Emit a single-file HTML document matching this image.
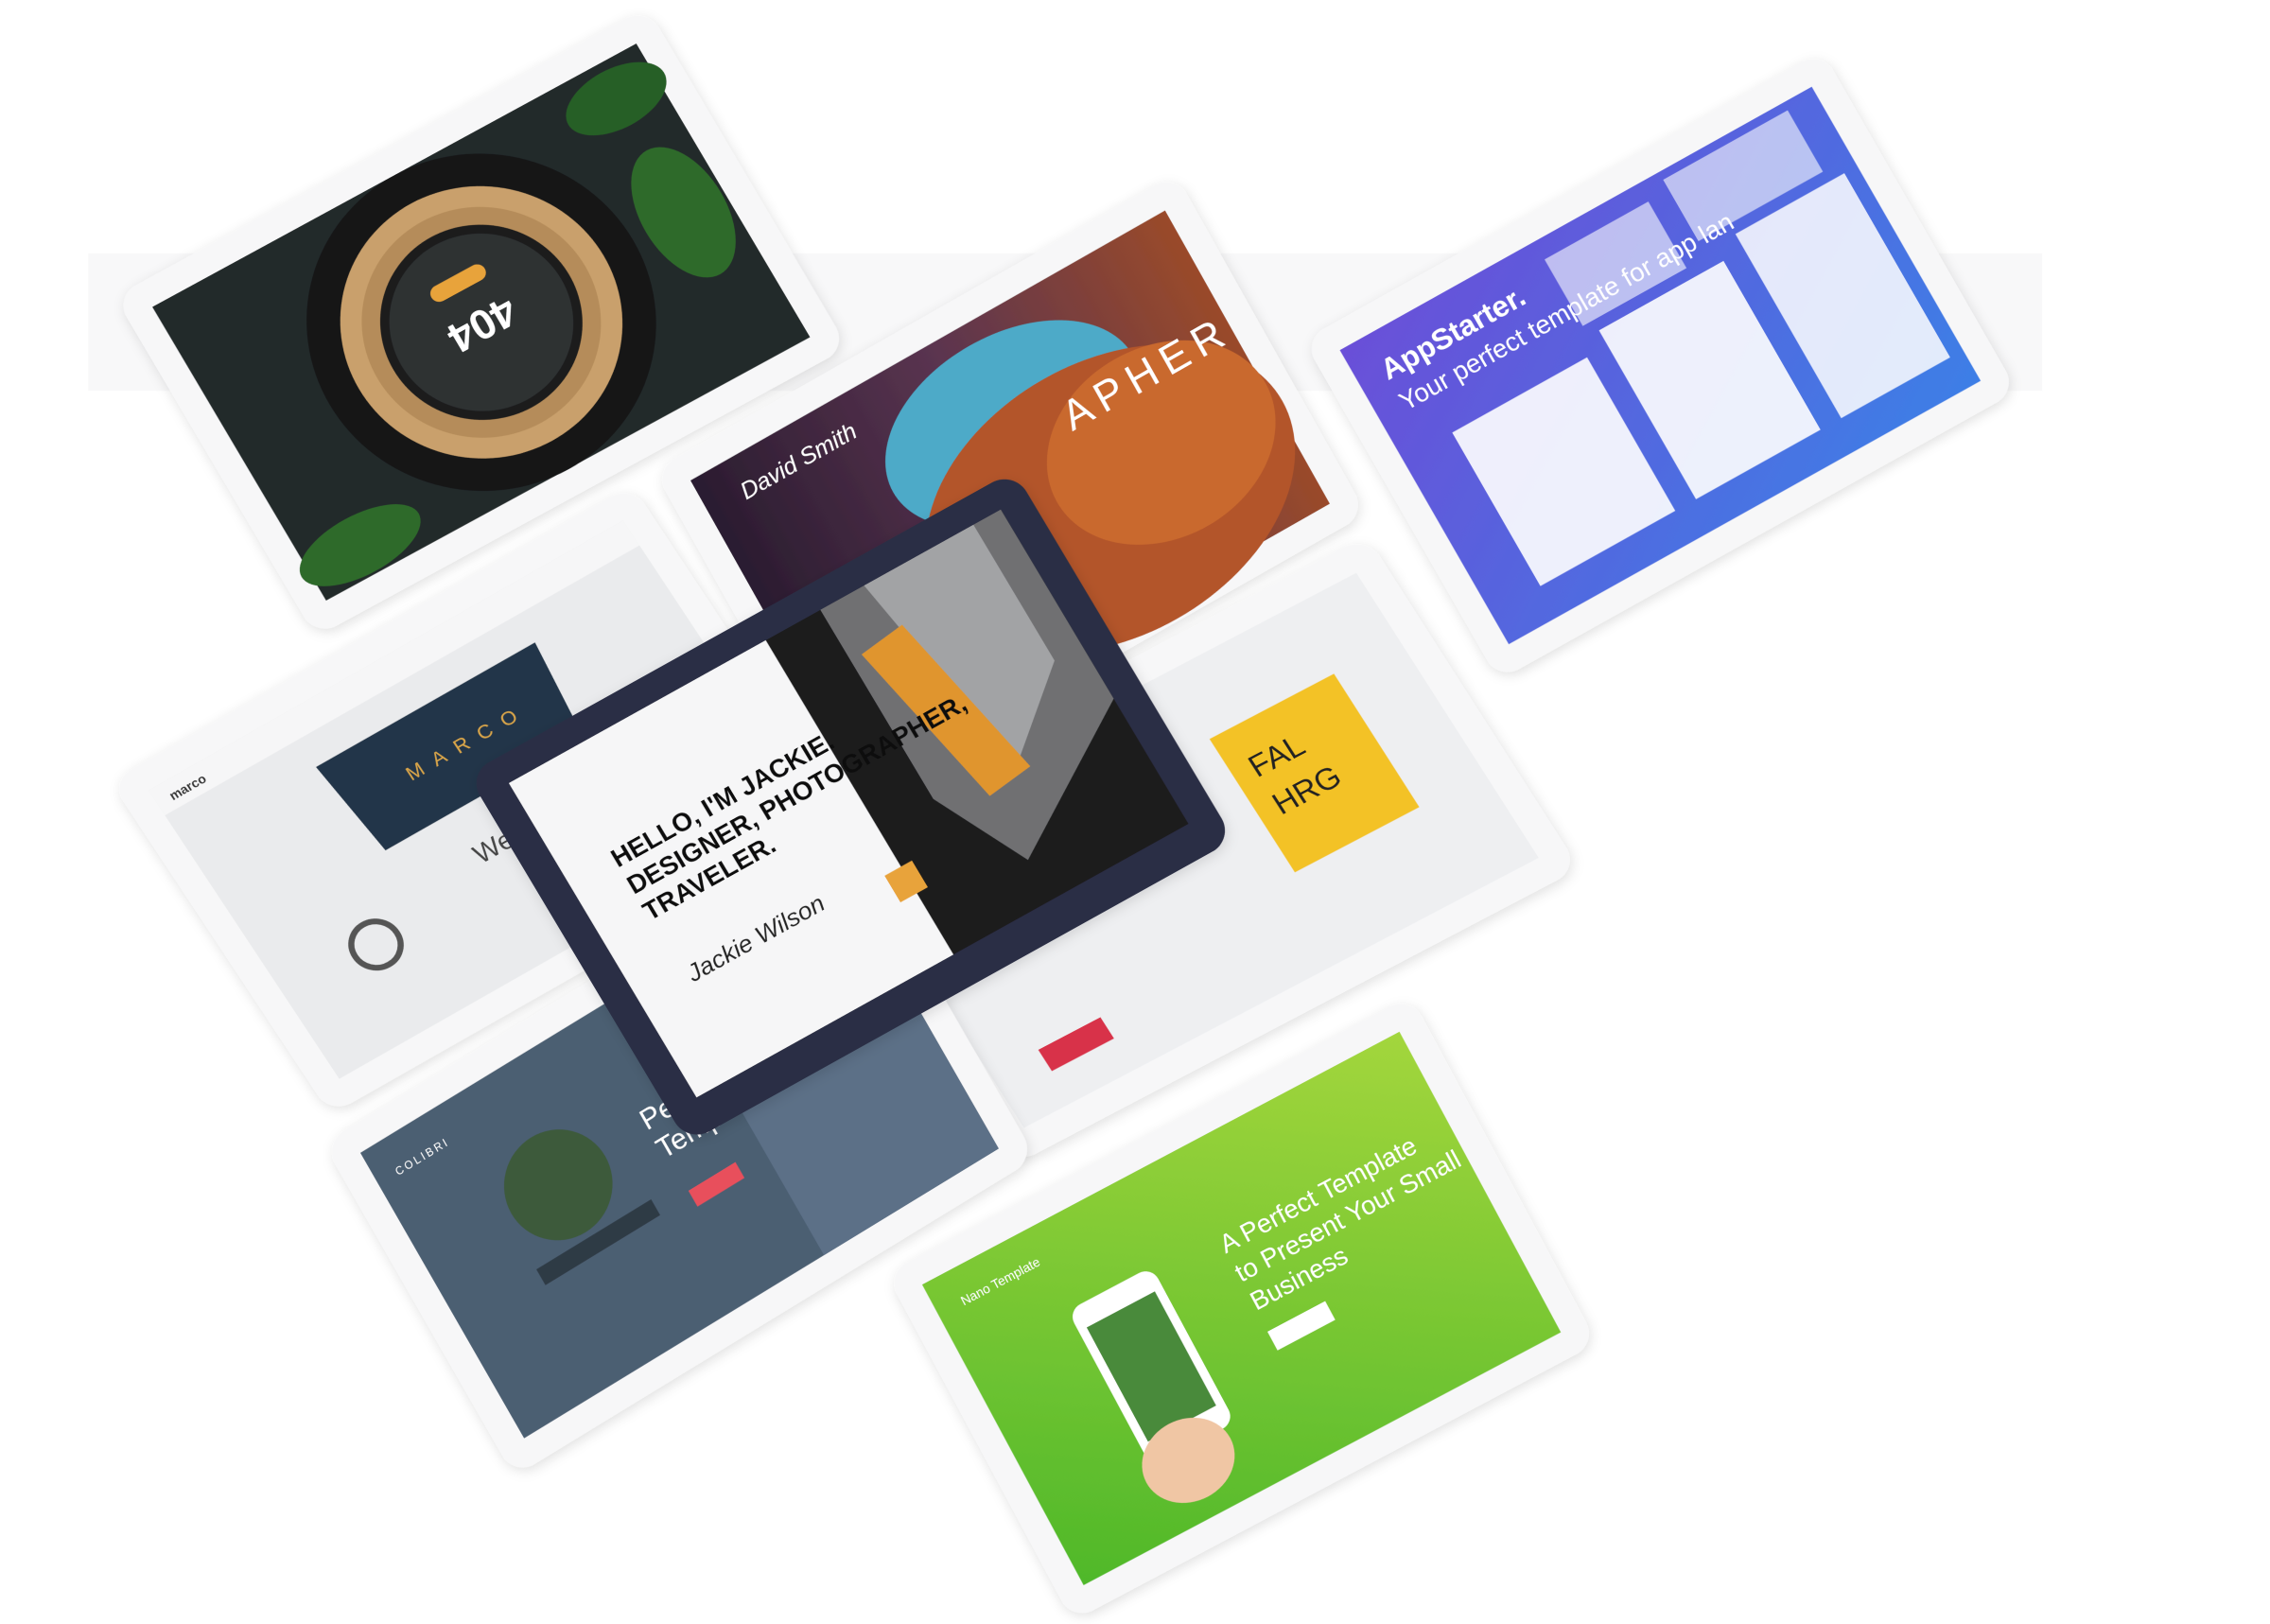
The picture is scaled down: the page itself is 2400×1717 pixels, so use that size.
<!DOCTYPE html>
<html><head><meta charset="utf-8"><style>
html,body{margin:0;padding:0;background:#fff;width:2400px;height:1717px;overflow:hidden}
svg{display:block}
text{font-family:"Liberation Sans",sans-serif}
</style></head><body>
<svg width="2400" height="1717" viewBox="0 0 1545 1122" preserveAspectRatio="none">
<defs>
<filter id="sh" x="-20%" y="-20%" width="140%" height="140%"><feDropShadow dx="0" dy="6" stdDeviation="10" flood-color="#000" flood-opacity="0.12"/></filter>
<linearGradient id="gApp" x1="0" y1="0" x2="1" y2="1"><stop offset="0" stop-color="#6a4fd8"/><stop offset="1" stop-color="#3d7fe6"/></linearGradient>
<linearGradient id="gGreen" x1="0" y1="1" x2="1" y2="0"><stop offset="0" stop-color="#4fb82a"/><stop offset="1" stop-color="#a3d63c"/></linearGradient>
<linearGradient id="gCave" x1="0" y1="0" x2="1" y2="0"><stop offset="0" stop-color="#2a1c30"/><stop offset="0.5" stop-color="#5a3450"/><stop offset="1" stop-color="#9a4a2a"/></linearGradient>
</defs>
<rect x="60" y="175" width="1330" height="95" fill="#f4f4f5" opacity="0.6"/>

<!-- T1 404 -->
<g transform="matrix(.362,-.2,.2079,.3566,78,205)" filter="url(#sh)">
<rect width="1000" height="659" rx="40" fill="#f7f7f8"/>
<rect x="45" y="45" width="910" height="569" fill="#23292b"/>
<ellipse cx="140" cy="560" rx="110" ry="50" fill="#2f6a2c"/>
<ellipse cx="880" cy="110" rx="90" ry="50" fill="#275e26"/>
<ellipse cx="880" cy="330" rx="70" ry="120" fill="#2f6a2c"/>
<circle cx="500" cy="330" r="285" fill="#151719"/>
<circle cx="500" cy="330" r="230" fill="#c9a06c"/>
<circle cx="500" cy="330" r="195" fill="#b58c5a"/>
<circle cx="500" cy="330" r="165" fill="#1a1c1e"/>
<circle cx="500" cy="330" r="150" fill="#2f3133"/>
<text x="500" y="350" transform="rotate(180 500 330)" font-size="70" font-weight="bold" fill="#fff" text-anchor="middle">404</text>
<rect x="450" y="240" width="100" height="28" rx="14" fill="#e8a33a"/>
</g>

<!-- T2 photographer -->
<g transform="matrix(.355,-.205,.1988,.3593,445,325)" filter="url(#sh)">
<rect width="1000" height="654" rx="40" fill="#f7f7f8"/>
<rect x="45" y="45" width="910" height="564" fill="url(#gCave)"/>
<ellipse cx="560" cy="230" rx="230" ry="150" fill="#4eaac8"/>
<ellipse cx="640" cy="420" rx="330" ry="230" fill="#b3552a"/>
<ellipse cx="760" cy="380" rx="200" ry="160" fill="#c9692e"/>
<text x="110" y="120" font-size="40" font-style="italic" fill="#fff">David Smith</text>
<text x="640" y="290" font-size="70" letter-spacing="14" fill="#fff">APHER</text>
</g>

<!-- T3 AppStarter -->
<g transform="matrix(.353,-.2,.2,.3534,887,235)" filter="url(#sh)">
<rect width="1000" height="665" rx="40" fill="#f7f7f8"/>
<rect x="45" y="45" width="910" height="575" fill="url(#gApp)"/>
<text x="90" y="130" font-size="50" font-weight="bold" fill="#fff">AppStarter.</text>
<text x="90" y="190" font-size="44" fill="#fff">Your perfect template for app lan</text>
<rect x="140" y="260" width="260" height="300" fill="#fff" opacity=".9"/>
<rect x="440" y="230" width="240" height="330" fill="#fff" opacity=".9"/>
<rect x="720" y="200" width="210" height="360" fill="#fff" opacity=".85"/>
<rect x="420" y="80" width="200" height="130" fill="#fff" opacity=".6"/>
<rect x="660" y="60" width="240" height="120" fill="#fff" opacity=".6"/>
</g>

<!-- Marco -->
<g transform="matrix(.355,-.205,.2235,.3428,75,540)" filter="url(#sh)">
<rect width="1000" height="671" rx="40" fill="#f7f7f8"/>
<rect x="45" y="45" width="910" height="581" fill="#eaebed"/>
<rect x="45" y="45" width="910" height="50" fill="#f6f6f7"/>
<text x="70" y="80" font-size="22" font-weight="bold" fill="#333">marco</text>
<polygon points="300,150 720,150 700,330 320,330" fill="#23364a"/>
<text x="420" y="250" font-size="34" letter-spacing="20" fill="#d9a64a">MARCO</text>
<text x="440" y="430" font-size="46" fill="#444">We are</text>
<circle cx="220" cy="460" r="40" fill="none" stroke="#555" stroke-width="10"/>
</g>

<!-- T5 red template -->
<g transform="matrix(.385,-.205,.2324,.3686,545,575)" filter="url(#sh)">
<rect width="1000" height="624" rx="40" fill="#f7f7f8"/>
<rect x="45" y="45" width="910" height="534" fill="#eeeff1"/>
<rect x="620" y="170" width="220" height="250" fill="#f3c226"/>
<text x="650" y="260" font-size="50" fill="#222">FAL</text>
<text x="650" y="330" font-size="50" fill="#222">HRG</text>
<rect x="130" y="480" width="110" height="40" fill="#d8334a"/>
</g>

<!-- Colibri -->
<g transform="matrix(.355,-.22,.2057,.3639,220,790)" filter="url(#sh)">
<rect width="1000" height="632" rx="40" fill="#f7f7f8"/>
<rect x="45" y="45" width="910" height="542" fill="#4b5e72"/>
<rect x="620" y="45" width="335" height="542" fill="#5c7087"/>
<circle cx="300" cy="260" r="90" fill="#3c5a3a"/>
<rect x="200" y="360" width="220" height="30" fill="#2f3a45"/>
<text x="80" y="110" font-size="18" letter-spacing="4" fill="#fff">COLIBRI</text>
<text x="470" y="260" font-size="48" fill="#fff">Perfect C</text>
<text x="470" y="315" font-size="48" fill="#fff">Templat</text>
<rect x="480" y="380" width="90" height="30" fill="#e8505b"/>
</g>

<!-- Green -->
<g transform="matrix(.357,-.192,.1898,.3587,603,880)" filter="url(#sh)">
<rect width="1000" height="669" rx="40" fill="#f7f7f8"/>
<rect x="45" y="45" width="910" height="579" fill="url(#gGreen)"/>
<text x="90" y="110" font-size="22" fill="#fff">Nano Template</text>
<rect x="240" y="200" width="160" height="300" rx="24" fill="#fff"/>
<rect x="255" y="240" width="130" height="220" fill="#4a8a3a"/>
<ellipse cx="300" cy="520" rx="80" ry="70" fill="#f0c6a4"/>
<text x="520" y="240" font-size="44" fill="#fff">A Perfect Template</text>
<text x="520" y="295" font-size="44" fill="#fff">to Present Your Small</text>
<text x="520" y="350" font-size="44" fill="#fff">Business</text>
<rect x="520" y="390" width="110" height="36" fill="#fff"/>
</g>

<!-- Laptop -->
<g transform="matrix(.372,-.21,.2165,.368,318,535)" filter="url(#sh)">
<rect width="1000" height="693" rx="40" fill="#2b2e44"/>
<rect x="50" y="45" width="900" height="590" fill="#1c1c1e"/>
<rect x="50" y="45" width="470" height="590" fill="#f6f6f7"/>
<polygon points="620,45 950,45 950,400 700,560 620,400" fill="#6f7072"/>
<polygon points="700,45 900,45 900,300 760,420" fill="#a2a3a5"/>
<polygon points="640,140 720,130 780,430 700,440" fill="#e0952e"/>
<text x="130" y="250" font-size="42" font-weight="bold" fill="#111">HELLO, I'M JACKIE.</text>
<text x="130" y="300" font-size="42" font-weight="bold" fill="#111">DESIGNER, PHOTOGRAPHER,</text>
<text x="130" y="350" font-size="42" font-weight="bold" fill="#111">TRAVELER.</text>
<text x="140" y="470" font-size="40" font-style="italic" fill="#222" font-family="Liberation Serif">Jackie Wilson</text>
<rect x="490" y="470" width="50" height="50" fill="#e8a33a"/>
</g>
</svg>
</body></html>
